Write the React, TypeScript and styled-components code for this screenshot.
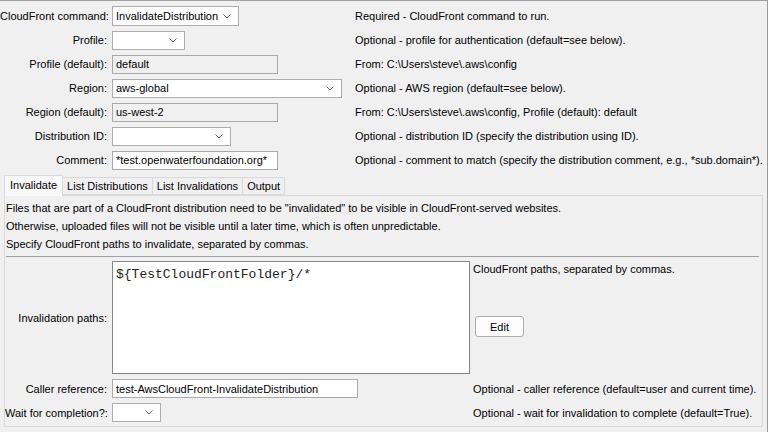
import React from "react";
import styled, { createGlobalStyle } from "styled-components";

const Global = createGlobalStyle`
  html, body { margin: 0; padding: 0; background: #ffffff; }
  body { font-family: "Liberation Sans", Arial, sans-serif; font-size: 11px; color: #000; }
  * { box-sizing: border-box; }
`;

const Window = styled.div`
  width: 768px;
  height: 432px;
  background: #f0f0f0;
  border-top: 1px solid #a0a0a0;
  border-right: 1px solid #9a9a9a;
  display: flex;
  flex-direction: column;
  overflow: hidden;
`;

const Form = styled.div`
  display: grid;
  grid-template-columns: 112px 243px 1fr;
  grid-auto-rows: 24px;
  align-items: center;
  padding-top: 3px;
`;

const Label = styled.div`
  text-align: right;
  padding-right: 5px;
  white-space: nowrap;
`;

const Desc = styled.div`
  white-space: nowrap;
`;

const Field = styled.div<{ $w: number; $h?: number; $disabled?: boolean }>`
  width: ${(p) => p.$w}px;
  height: ${(p) => p.$h ?? 19}px;
  border: 1px solid #a9a9a9;
  background: ${(p) => (p.$disabled ? "#f0f0f0" : "#ffffff")};
  display: flex;
  align-items: center;
  padding-left: 3px;
  white-space: nowrap;
  overflow: hidden;
`;

const ComboBox = styled(Field)`
  justify-content: space-between;
  padding-right: 7px;
  border-color: #adadad;
`;

const Chevron = () => (
  <svg width="8" height="5" viewBox="0 0 8 5" style={{ flex: "none" }}>
    <path d="M0.5 0.5 L4 4 L7.5 0.5" fill="none" stroke="#606060" strokeWidth="1" />
  </svg>
);

const Combo: React.FC<{ w: number; h?: number; value?: string }> = ({ w, h, value }) => (
  <ComboBox $w={w} $h={h}>
    <span>{value ?? ""}</span>
    <Chevron />
  </ComboBox>
);

const TabBar = styled.div`
  display: flex;
  align-items: flex-end;
  margin: 3px 0 0 4px;
  height: 20px;
  position: relative;
  z-index: 1;
`;

const Tab = styled.div<{ $active?: boolean }>`
  height: ${(p) => (p.$active ? 21 : 18)}px;
  padding: ${(p) => (p.$active ? "1px 5px 0 5px" : "0 4px")};
  border: 1px solid #d9d9d9;
  border-bottom: ${(p) => (p.$active ? "none" : "1px solid #d9d9d9")};
  border-left: ${(p) => (p.$active ? "1px solid #d9d9d9" : "none")};
  background: ${(p) => (p.$active ? "#f9f9f9" : "#f0f0f0")};
  margin-bottom: ${(p) => (p.$active ? "-1px" : "0")};
  display: flex;
  align-items: ${(p) => (p.$active ? "flex-start" : "center")};
  white-space: nowrap;
  line-height: 17px;
`;

const Panel = styled.div`
  margin: 0 4px 0 4px;
  height: 232px;
  border: 1px solid #d9d9d9;
  background: #f0f0f0;
  padding: 3px 2px 0 1px;
  display: flex;
  flex-direction: column;
`;

const InfoLine = styled.div`
  height: 18px;
  line-height: 18px;
  white-space: nowrap;
`;

const Separator = styled.div`
  margin-top: 3px;
  height: 1px;
  background: #a0a0a0;
  margin-right: 1px;
`;

const BottomForm = styled.div`
  display: grid;
  grid-template-columns: 107px 361px 1fr;
  row-gap: 5px;
  align-items: center;
  padding-top: 4px;
  margin-left: -1px;
`;

const TextArea = styled.div`
  width: 358px;
  height: 113px;
  background: #ffffff;
  border: 1px solid #828790;
  padding: 5px 3px;
  font-family: "Liberation Mono", "Courier New", monospace;
  font-size: 13px;
  line-height: 16px;
  color: #222;
  white-space: pre;
`;

const SideColumn = styled.div`
  align-self: stretch;
  display: flex;
  flex-direction: column;
  align-items: flex-start;
`;

const SideText = styled.div`
  line-height: 16px;
  white-space: nowrap;
`;

const Button = styled.div`
  margin-top: 39px;
  margin-left: 2px;
  width: 49px;
  height: 21px;
  border: 1px solid #adadad;
  border-radius: 3px;
  background: #fdfdfd;
  display: flex;
  align-items: center;
  justify-content: center;
`;

export default function App() {
  return (
    <>
      <Global />
      <Window>
        <Form>
          <Label>CloudFront command:</Label>
          <div><Combo w={127} h={20} value="InvalidateDistribution" /></div>
          <Desc>Required - CloudFront command to run.</Desc>

          <Label>Profile:</Label>
          <div><Combo w={73} /></div>
          <Desc>Optional - profile for authentication (default=see below).</Desc>

          <Label>Profile (default):</Label>
          <div><Field $w={166} $disabled>default</Field></div>
          <Desc>From: C:\Users\steve\.aws\config</Desc>

          <Label>Region:</Label>
          <div><Combo w={230} value="aws-global" /></div>
          <Desc>Optional - AWS region (default=see below).</Desc>

          <Label>Region (default):</Label>
          <div><Field $w={166} $disabled>us-west-2</Field></div>
          <Desc>From: C:\Users\steve\.aws\config, Profile (default): default</Desc>

          <Label>Distribution ID:</Label>
          <div><Combo w={119} /></div>
          <Desc>Optional - distribution ID (specify the distribution using ID).</Desc>

          <Label>Comment:</Label>
          <div><Field $w={166}>*test.openwaterfoundation.org*</Field></div>
          <Desc>Optional - comment to match (specify the distribution comment, e.g., *sub.domain*).</Desc>
        </Form>

        <TabBar>
          <Tab $active>Invalidate</Tab>
          <Tab>List Distributions</Tab>
          <Tab>List Invalidations</Tab>
          <Tab>Output</Tab>
        </TabBar>

        <Panel>
          <InfoLine>Files that are part of a CloudFront distribution need to be "invalidated" to be visible in CloudFront-served websites.</InfoLine>
          <InfoLine>Otherwise, uploaded files will not be visible until a later time, which is often unpredictable.</InfoLine>
          <InfoLine>Specify CloudFront paths to invalidate, separated by commas.</InfoLine>
          <Separator />
          <BottomForm>
            <Label>Invalidation paths:</Label>
            <div><TextArea>{"${TestCloudFrontFolder}/*"}</TextArea></div>
            <SideColumn>
              <SideText>CloudFront paths, separated by commas.</SideText>
              <Button>Edit</Button>
            </SideColumn>

            <Label>Caller reference:</Label>
            <div><Field $w={246}>test-AwsCloudFront-InvalidateDistribution</Field></div>
            <Desc>Optional - caller reference (default=user and current time).</Desc>

            <Label>Wait for completion?:</Label>
            <div><Combo w={49} /></div>
            <Desc>Optional - wait for invalidation to complete (default=True).</Desc>
          </BottomForm>
        </Panel>
      </Window>
    </>
  );
}
